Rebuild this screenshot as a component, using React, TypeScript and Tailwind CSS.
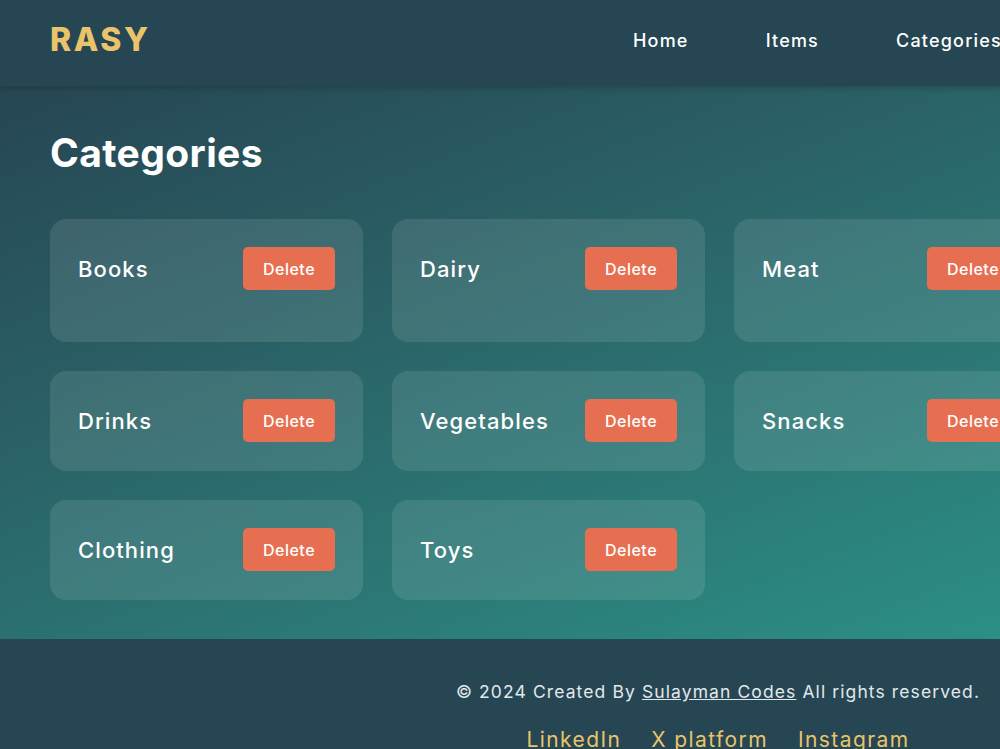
import React from "react";

const categories = ["Books", "Dairy", "Meat", "Drinks", "Vegetables", "Snacks", "Clothing", "Toys"];

const CategoryCard = ({ name, tall }: { name: string; tall: boolean }) => (
  <div
    className={`flex items-start justify-between rounded-2xl bg-white/10 p-[28px] ${tall ? "h-[123px]" : "h-[100px]"}`}
  >
    <span className="pt-[9px] text-[22px] font-medium leading-[26px] tracking-[1.1px] text-white">{name}</span>
    <button className="flex h-[43px] w-[92px] items-center justify-center rounded-[5px] bg-[#e76f51] text-[16px] font-medium tracking-[0.5px] text-white">
      Delete
    </button>
  </div>
);

export default function App() {
  return (
    <div className="w-[1436px] font-['Inter',sans-serif]">
      <header className="relative z-10 flex h-[86px] items-center bg-[#264653] px-[50px] pb-[6px] shadow-[0_2px_6px_rgba(0,0,0,0.2)]">
        <div className="w-[583px] text-[32px] font-extrabold tracking-[2.6px] text-[#e9c46a]">RASY</div>
        <nav className="flex gap-[77px] text-[18px] font-medium tracking-[1.2px] text-white">
          <a href="#">Home</a>
          <a href="#">Items</a>
          <a href="#">Categories</a>
          <a href="#">Add Item</a>
          <a href="#">Add Category</a>
        </nav>
      </header>

      <main className="bg-gradient-to-br from-[#264653] to-[#2a9d8f] px-[50px] pb-[39px] pt-[40px]">
        <h1 className="mb-[39px] text-[39px] font-bold leading-[54px] tracking-[0.4px] text-white">Categories</h1>
        <div className="grid grid-cols-[repeat(3,313px)] gap-[29px]">
          {categories.map((c, i) => (
            <CategoryCard key={c} name={c} tall={i < 3} />
          ))}
        </div>
      </main>

      <footer className="bg-[#264653] pb-[40px] pt-[40px] text-center">
        <p className="text-[17.5px] tracking-[1.1px] text-[#e2e8ec]">
          © 2024 Created By{" "}
          <a href="#" className="underline">
            Sulayman Codes
          </a>{" "}
          All rights reserved.
        </p>
        <div className="mt-[19px] flex justify-center gap-[30px] text-[21px] tracking-[1.4px] text-[#e9c46a]">
          <a href="#">LinkedIn</a>
          <a href="#">X platform</a>
          <a href="#">Instagram</a>
        </div>
      </footer>
    </div>
  );
}
